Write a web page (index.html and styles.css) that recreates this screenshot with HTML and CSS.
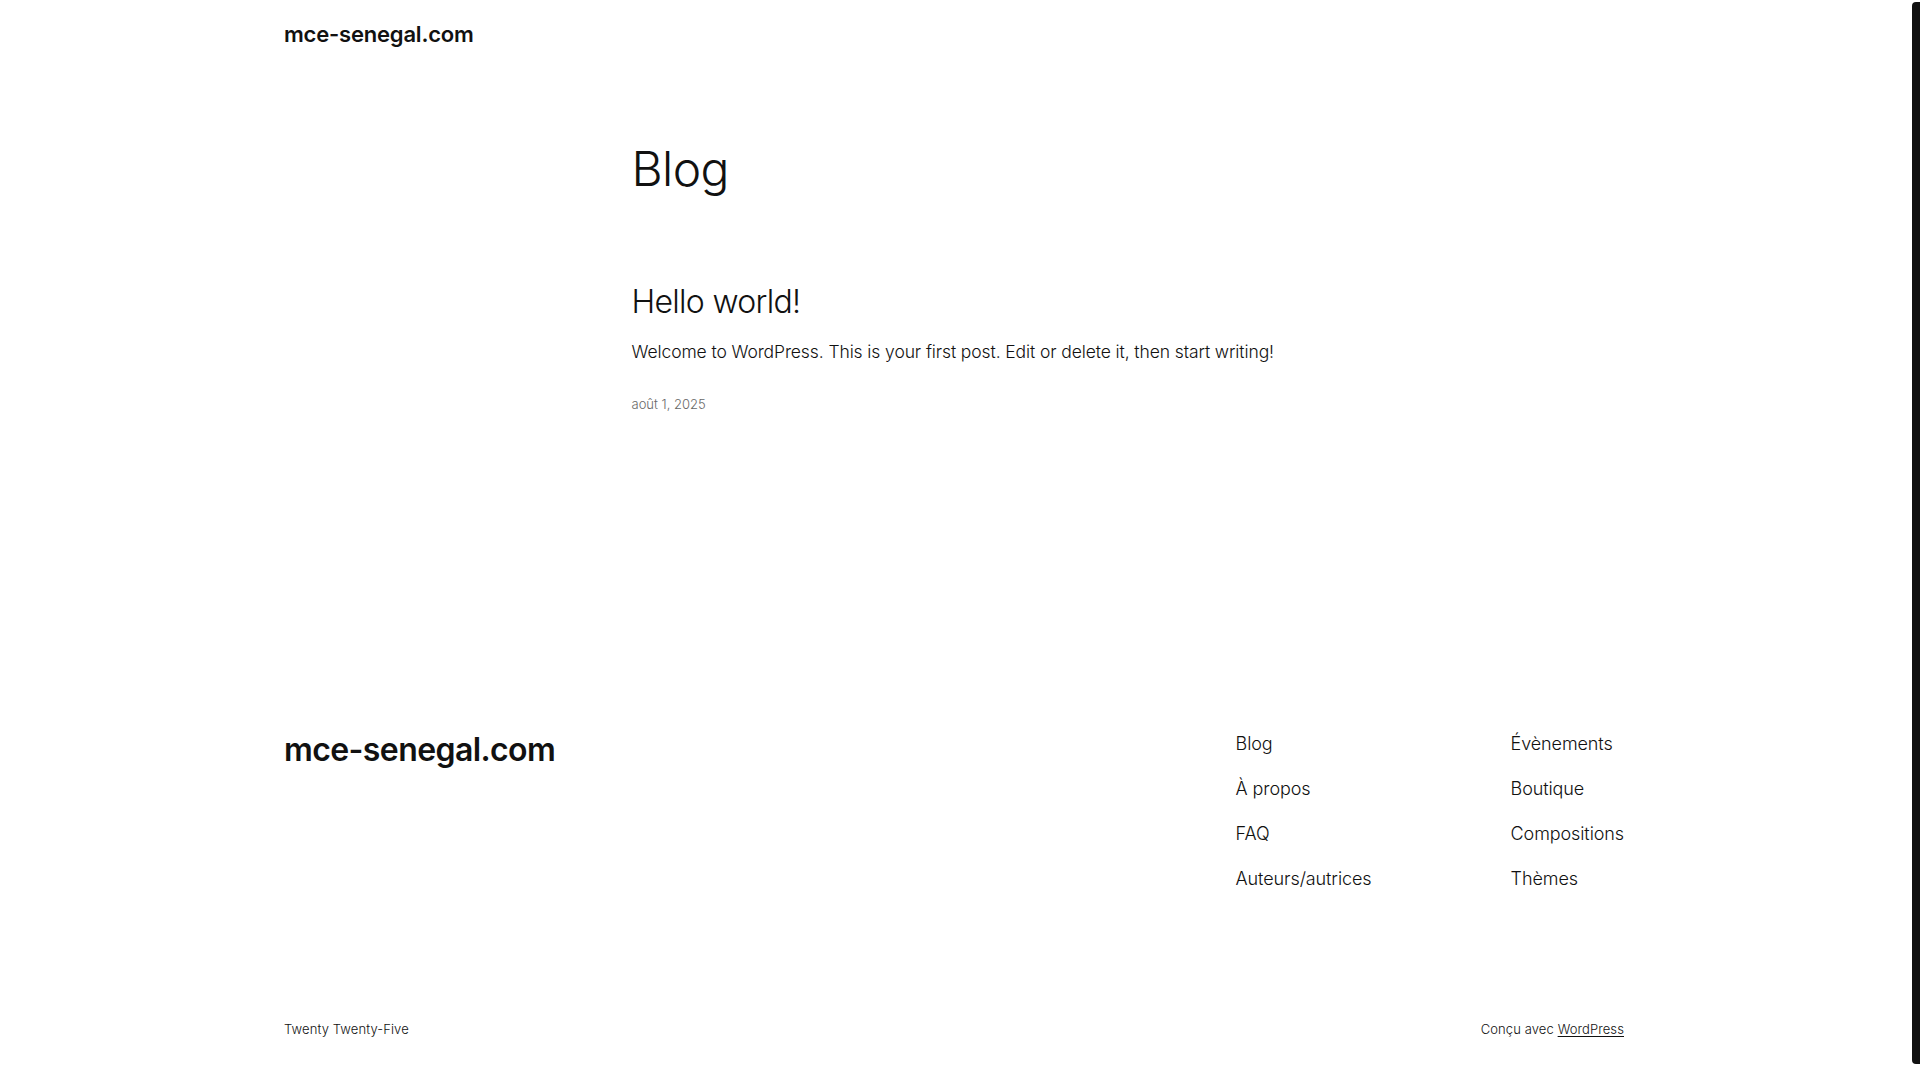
FILE: index.html
```html
<!DOCTYPE html>
<html lang="fr">
<head>
    <meta charset="UTF-8">
    <meta name="viewport" content="width=device-width, initial-scale=1.0">
    <title>Blog – mce-senegal.com</title>
    <link rel="stylesheet" href="styles.css">
</head>
<body>

<header class="site-header">
    <div class="wrap">
        <a class="site-title" href="#">mce-senegal.com</a>
    </div>
</header>

<main class="site-main">
    <h1 class="page-title">Blog</h1>

    <!-- Query loop: one post -->
    <article class="post">
        <h2 class="post-title"><a href="#">Hello world!</a></h2>
        <p class="post-excerpt">Welcome to WordPress. This is your first post. Edit or delete it, then start writing!</p>
        <time class="post-date" datetime="2025-08-01">août 1, 2025</time>
    </article>
</main>

<footer class="site-footer">
    <div class="wrap">
        <div class="footer-top">
            <a class="footer-title" href="#">mce-senegal.com</a>
            <nav class="footer-nav">
                <ul class="footer-menu">
                    <li><a href="#">Blog</a></li>
                    <li><a href="#">À propos</a></li>
                    <li><a href="#">FAQ</a></li>
                    <li><a href="#">Auteurs/autrices</a></li>
                </ul>
                <ul class="footer-menu">
                    <li><a href="#">Évènements</a></li>
                    <li><a href="#">Boutique</a></li>
                    <li><a href="#">Compositions</a></li>
                    <li><a href="#">Thèmes</a></li>
                </ul>
            </nav>
        </div>
        <div class="footer-bottom">
            <span>Twenty Twenty-Five</span>
            <span>Conçu avec <a class="credit" href="#">WordPress</a></span>
        </div>
    </div>
</footer>

<!-- window scrollbar thumb -->
<div class="scroll-thumb"></div>

</body>
</html>
```

FILE: styles.css
```css
/* Twenty Twenty-Five look */
html {
    background: #fff;
}
body {
    margin: 0;
    padding-right: 12px;
    font-family: Inter, "Noto Sans", sans-serif;
    font-size: 18px;
    line-height: 1.5;
    color: #111111;
    background: #fff;
}
a {
    color: inherit;
    text-decoration: none;
}
.wrap {
    max-width: 1340px;
    margin: 0 auto;
}
.scroll-thumb {
    position: fixed;
    top: 2px;
    right: 0;
    width: 8px;
    height: 1062px;
    background: #111;
    border-radius: 4px 0 0 4px;
}

/* header */
.site-header {
    padding-top: 20px;
}
.site-title {
    font-size: 22px;
    line-height: 28px;
    font-weight: 600;
    letter-spacing: -0.2px;
}

/* main */
.site-main {
    max-width: 645px;
    margin: 0 auto;
    padding-top: 91px;
}
.page-title {
    margin: 0;
    font-size: 48px;
    line-height: 1.2;
    font-weight: 300;
    letter-spacing: -0.6px;
}
.post {
    padding-top: 85px;
}
.post-title {
    margin: 0;
    font-size: 32px;
    line-height: 1.2;
    font-weight: 300;
    letter-spacing: -0.7px;
}
.post-excerpt {
    margin: 17px 0 0;
    font-size: 17.5px;
    line-height: 27px;
    font-weight: 300;
    letter-spacing: -0.1px;
}
.post-date {
    display: block;
    margin-top: 30px;
    font-size: 13px;
    line-height: 18px;
    font-weight: 300;
    color: #686868;
}

/* footer */
.site-footer {
    padding-top: 318px;
    padding-bottom: 66px;
}
.footer-top {
    display: flex;
    justify-content: space-between;
    align-items: flex-start;
}
.footer-title {
    font-size: 32px;
    line-height: 38px;
    font-weight: 600;
    letter-spacing: -0.6px;
}
.footer-nav {
    display: grid;
    grid-template-columns: 275px auto;
    margin-top: -1px;
}
.footer-menu {
    list-style: none;
    margin: 0;
    padding: 0;
    display: flex;
    flex-direction: column;
    gap: 18px;
}
.footer-menu li {
    font-size: 18px;
    line-height: 27px;
    font-weight: 300;
    letter-spacing: -0.1px;
}
.footer-bottom {
    display: flex;
    justify-content: space-between;
    margin-top: 128px;
    font-size: 13px;
    line-height: 18px;
    font-weight: 300;
    letter-spacing: 0.1px;
}
.credit {
    text-decoration: underline;
    text-underline-offset: 2px;
}
```
